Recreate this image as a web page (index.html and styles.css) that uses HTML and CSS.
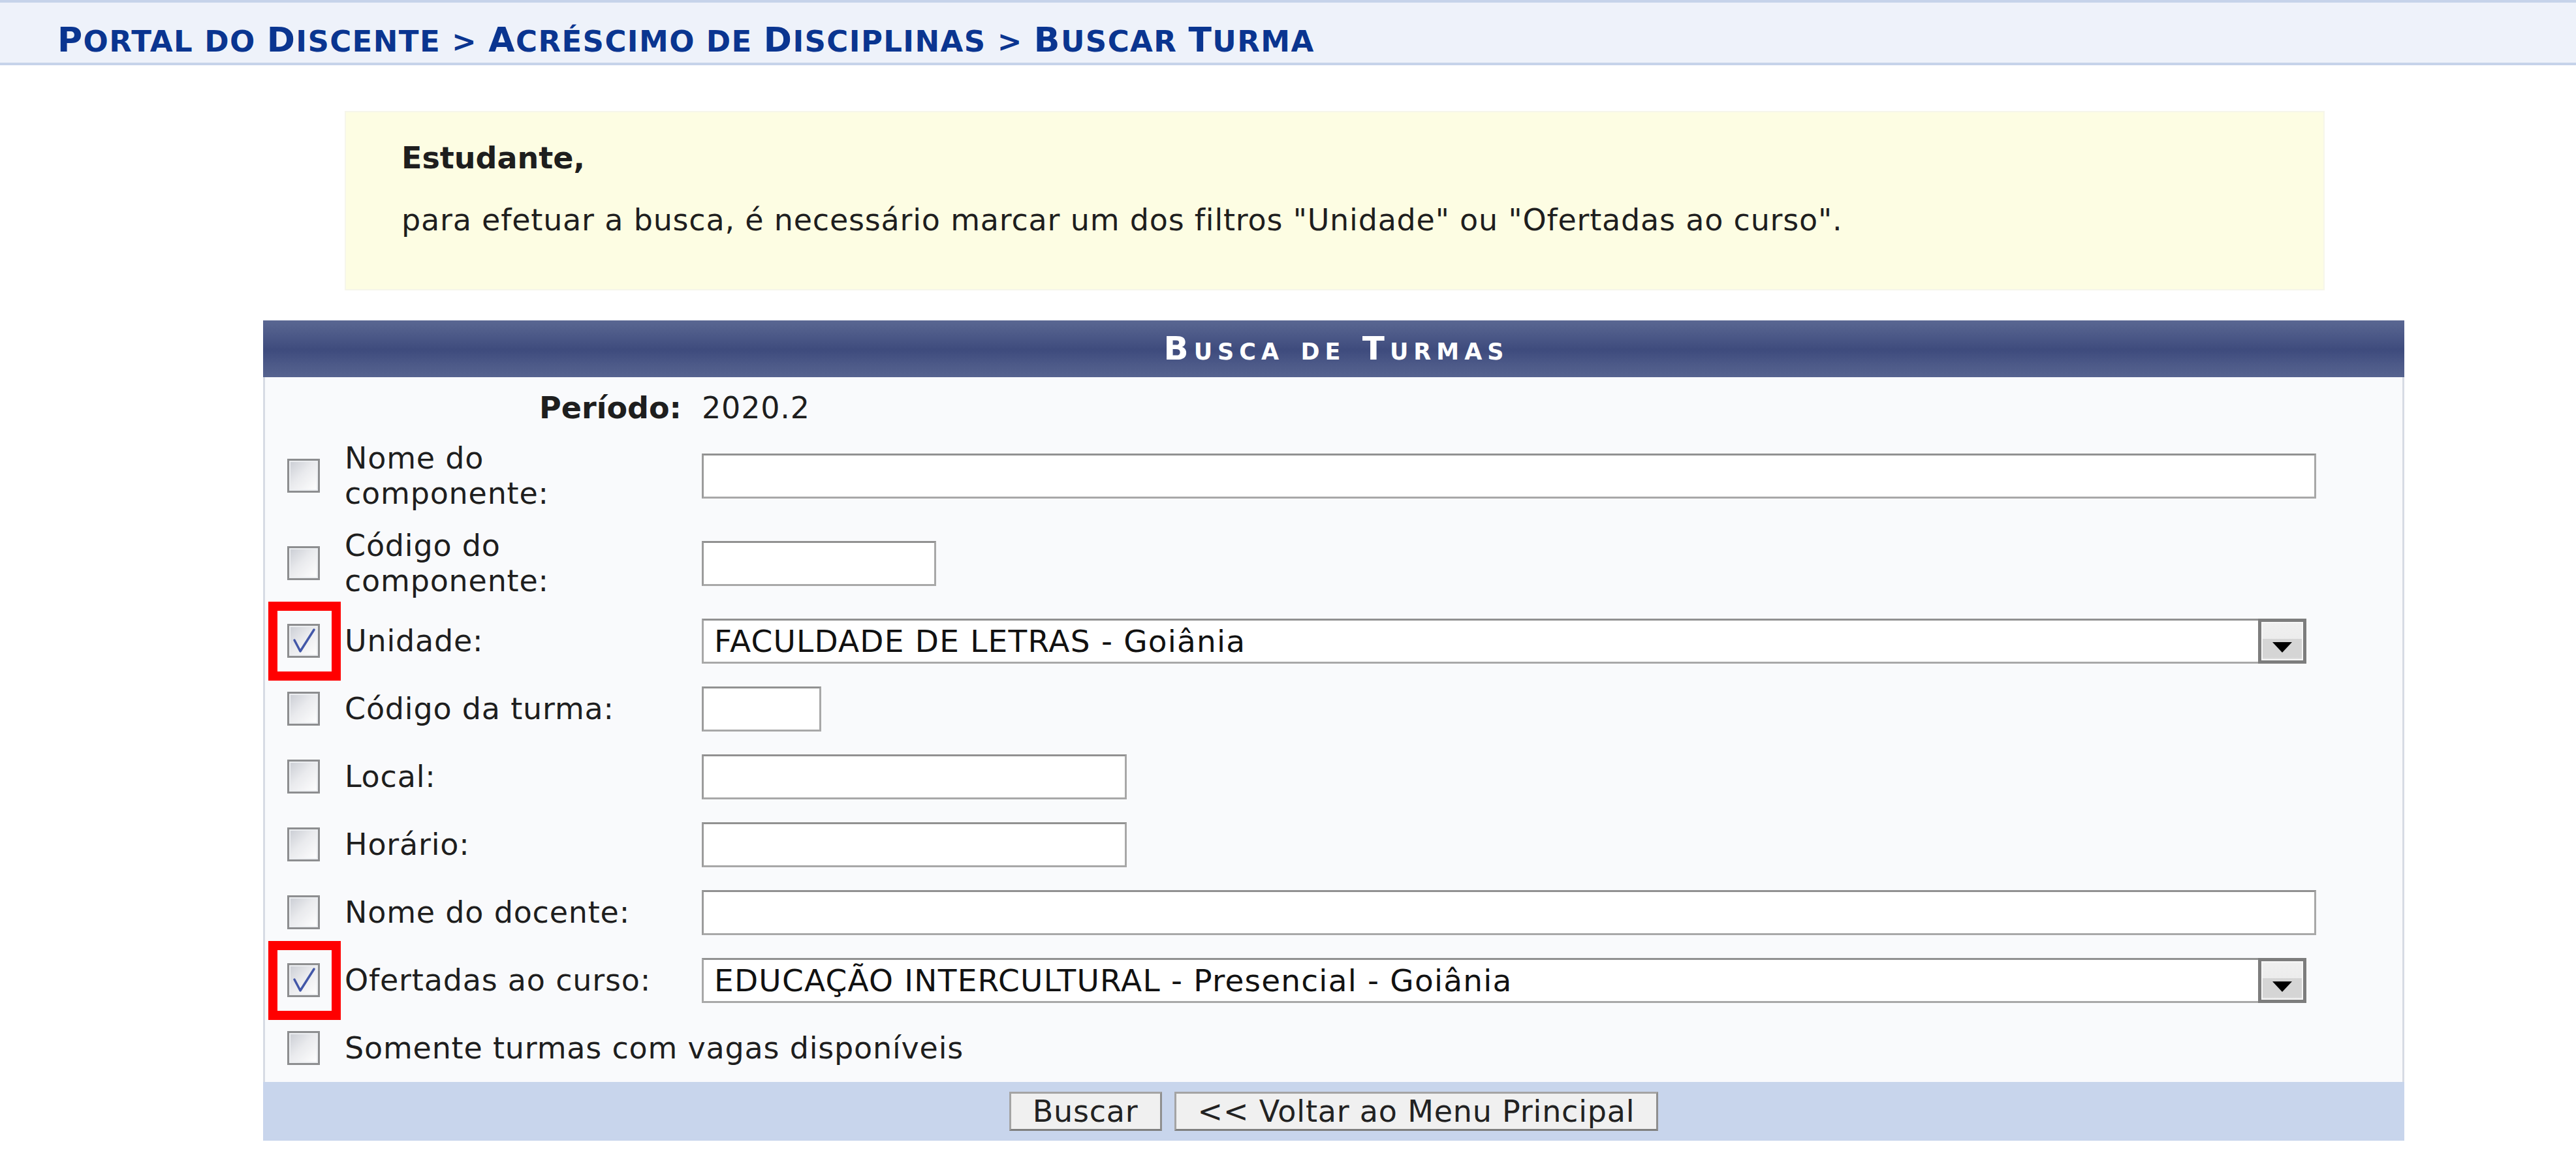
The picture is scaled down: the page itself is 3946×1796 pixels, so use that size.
FILE: index.html
```html
<!DOCTYPE html>
<html lang="pt-BR">
<head>
<meta charset="utf-8">
<title>Buscar Turma</title>
<link rel="stylesheet" href="styles.css">
</head>
<body>
<div class="crumbbar">
  <h2 class="crumb"><span class="big">P</span>ortal do <span class="big">D</span>iscente &gt; <span class="big">A</span>créscimo de <span class="big">D</span>isciplinas &gt; <span class="big">B</span>uscar <span class="big">T</span>urma</h2>
</div>

<div class="wrap">
  <div class="notice">
    <p class="n-title">Estudante,</p>
    <p class="n-text">para efetuar a busca, é necessário marcar um dos filtros "Unidade" ou "Ofertadas ao curso".</p>
  </div>

  <div class="panel">
    <div class="caption">Busca de Turmas</div>
    <div class="form">
      <div class="row periodo">
        <span class="plabel">Período:</span>
        <span class="pvalue">2020.2</span>
      </div>

      <div class="row">
        <div class="cbcell"><span class="cb"></span></div>
        <div class="label">Nome do<br>componente:</div>
        <div class="field"><span class="inp w-full"></span></div>
      </div>

      <div class="row">
        <div class="cbcell"><span class="cb"></span></div>
        <div class="label">Código do<br>componente:</div>
        <div class="field"><span class="inp w-cc"></span></div>
      </div>

      <div class="row">
        <div class="cbcell">
          <span class="cb"><svg viewBox="0 0 44 46" class="tick"><path d="M8 22 L17 39 L38 6"/></svg></span>
          <span class="mark"></span>
        </div>
        <div class="label">Unidade:</div>
        <div class="field">
          <div class="sel">
            <span class="sel-text">FACULDADE DE LETRAS - Goiânia</span>
            <span class="sel-btn"><span class="tri"></span></span>
          </div>
        </div>
      </div>

      <div class="row">
        <div class="cbcell"><span class="cb"></span></div>
        <div class="label">Código da turma:</div>
        <div class="field"><span class="inp w-ct"></span></div>
      </div>

      <div class="row">
        <div class="cbcell"><span class="cb"></span></div>
        <div class="label">Local:</div>
        <div class="field"><span class="inp w-loc"></span></div>
      </div>

      <div class="row">
        <div class="cbcell"><span class="cb"></span></div>
        <div class="label">Horário:</div>
        <div class="field"><span class="inp w-loc"></span></div>
      </div>

      <div class="row">
        <div class="cbcell"><span class="cb"></span></div>
        <div class="label">Nome do docente:</div>
        <div class="field"><span class="inp w-full"></span></div>
      </div>

      <div class="row">
        <div class="cbcell">
          <span class="cb"><svg viewBox="0 0 44 46" class="tick"><path d="M8 22 L17 39 L38 6"/></svg></span>
          <span class="mark"></span>
        </div>
        <div class="label">Ofertadas ao curso:</div>
        <div class="field">
          <div class="sel">
            <span class="sel-text">EDUCAÇÃO INTERCULTURAL - Presencial - Goiânia</span>
            <span class="sel-btn"><span class="tri"></span></span>
          </div>
        </div>
      </div>

      <div class="row">
        <div class="cbcell"><span class="cb"></span></div>
        <div class="label wide">Somente turmas com vagas disponíveis</div>
      </div>
    </div>
    <div class="foot">
      <button class="btn" type="button">Buscar</button>
      <button class="btn" type="button">&lt;&lt; Voltar ao Menu Principal</button>
    </div>
  </div>
</div>
</body>
</html>
```

FILE: styles.css
```css
html, body {
  margin: 0;
  padding: 0;
  background: #ffffff;
}

body {
  font-family: "DejaVu Sans", Verdana, sans-serif;
  font-size: 46px;
  color: #1e1e1e;
  letter-spacing: 0.8px;
}

/* breadcrumb */
.crumbbar {
  height: 100px;
  box-sizing: border-box;
  background: #eef2fa;
  border-top: 4px solid #c6d3ea;
  border-bottom: 4px solid #c6d3ea;
  padding: 27px 0 0 88px;
}

.crumb {
  margin: 0;
  font-size: 45px;
  line-height: 60px;
  font-weight: bold;
  letter-spacing: 1.4px;
  text-transform: uppercase;
  color: #0a3590;
  white-space: nowrap;
}

.crumb .big {
  font-size: 52px;
}

/* content wrapper */
.wrap {
  margin-left: 403px;
  width: 3280px;
}

.notice {
  margin: 70px 122px 46px 125px;
  background: #fdfde3;
  border: 2px solid #f6f6ea;
  padding: 43px 87px 79px 85px;
}

.notice p {
  margin: 0;
  line-height: 54px;
}

.n-title {
  font-weight: bold;
  letter-spacing: 0;
}

.notice .n-text {
  margin-top: 41px;
}

/* panel */
.panel {
  width: 100%;
}

.caption {
  height: 87px;
  line-height: 87px;
  text-align: center;
  color: #ffffff;
  font-weight: bold;
  font-size: 50px;
  font-variant: small-caps;
  letter-spacing: 8px;
  padding-left: 8px;
  background: linear-gradient(#5a6792 0%, #4a5786 30%, #3e4b7d 52%, #4b5887 75%, #56638f 100%);
}

.form {
  background: #f9fafc;
  border-left: 3px solid #d7dbe4;
  border-right: 3px solid #d7dbe4;
}

.row {
  display: grid;
  grid-template-columns: 122px 547px 1fr;
  align-items: center;
  min-height: 104px;
  box-sizing: border-box;
  padding: 13px 0;
}

.row.periodo {
  min-height: 0;
  height: 84px;
  padding: 20px 0 10px;
  align-items: start;
}

.plabel {
  grid-column: 1 / 3;
  text-align: right;
  padding-right: 31px;
  font-weight: bold;
  letter-spacing: 0;
  line-height: 54px;
}

.pvalue {
  line-height: 54px;
}

.label {
  line-height: 54px;
}

.label.wide {
  grid-column: 2 / 4;
}

.cbcell {
  position: relative;
  padding-left: 34px;
  height: 52px;
}

.cb {
  display: block;
  width: 50px;
  height: 52px;
  box-sizing: border-box;
  border: 3px solid #8d8e90;
  background: linear-gradient(135deg, #c9ccd3 0%, #e9eaed 45%, #ffffff 100%);
  box-shadow: inset 0 0 0 2px #eceef1;
}

.tick {
  display: block;
  width: 44px;
  height: 46px;
}

.tick path {
  fill: none;
  stroke: #4257a8;
  stroke-width: 3.5;
  stroke-linecap: round;
  stroke-linejoin: round;
}

.mark {
  position: absolute;
  left: 5px;
  top: -34px;
  width: 111px;
  height: 121px;
  box-sizing: border-box;
  border: 14px solid #ff0000;
}

/* inputs */
.inp {
  display: block;
  height: 69px;
  box-sizing: border-box;
  border: 3px solid #a8a8a8;
  border-top-color: #919191;
  border-left-color: #9c9c9c;
  background: #ffffff;
}

.w-full { width: 2473px; }
.w-cc { width: 359px; }
.w-ct { width: 183px; }
.w-loc { width: 651px; }

.sel {
  display: flex;
  width: 2458px;
  height: 69px;
  box-sizing: border-box;
  border: 3px solid #a8a8a8;
  border-top-color: #919191;
  border-right: 0;
  background: #ffffff;
}

.sel-text {
  flex: 1;
  padding-left: 16px;
  font-size: 47px;
  letter-spacing: 1.2px;
  line-height: 63px;
  color: #111111;
  white-space: nowrap;
}

.sel-btn {
  width: 74px;
  margin: -3px 0;
  box-sizing: border-box;
  border: 5px solid #7d7d7d;
  background: linear-gradient(#f0f0f0 0%, #ececec 44%, #d5d5d5 44%, #d5d5d5 92%, #e9e9e9 100%);
  box-shadow: inset 0 0 0 2px #f7f7f7;
  display: flex;
  justify-content: center;
  align-items: center;
}

.tri {
  width: 0;
  height: 0;
  margin-top: 20px;
  border-left: 15px solid transparent;
  border-right: 15px solid transparent;
  border-top: 16px solid #000000;
}

/* footer */
.foot {
  height: 90px;
  background: #c8d5ec;
  display: flex;
  justify-content: center;
  align-items: center;
  gap: 19px;
}

.btn {
  height: 60px;
  padding: 0 33px;
  margin: 0;
  font-family: "DejaVu Sans", Verdana, sans-serif;
  font-size: 46px;
  letter-spacing: 0.8px;
  color: #222222;
  background: #f0f0f0;
  border: 3px solid #a4a4a4;
  border-bottom-color: #7f7f7f;
  border-right-color: #8f8f8f;
  border-radius: 0;
  line-height: 52px;
}
```
